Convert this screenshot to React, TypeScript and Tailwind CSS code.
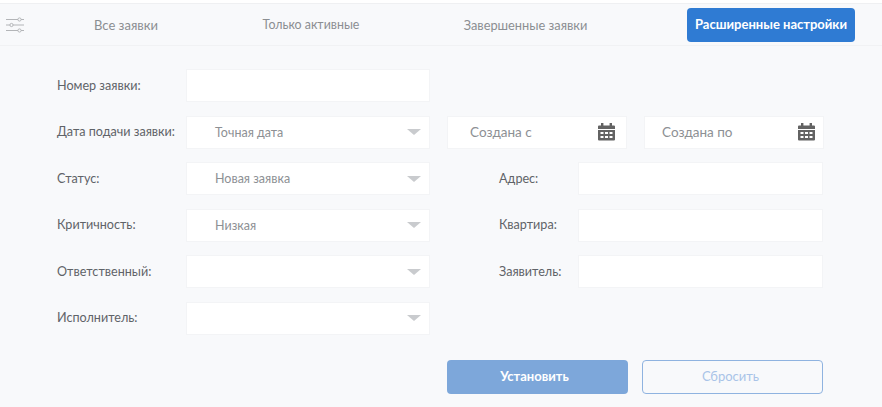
import { ReactNode } from "react";

const font = "font-['Lato','Noto_Sans',sans-serif]";

function FieldLabel(props: { children: ReactNode; className?: string }) {
  return (
    <div className={`text-[12.6px] leading-none pt-[1px] text-[#5f6368] ${props.className ?? ""}`}>
      {props.children}
    </div>
  );
}

function Box(props: { className?: string; children?: ReactNode }) {
  return (
    <div
      className={`h-[33px] flex items-center bg-white border border-[#f3f4f6] text-[12.5px] text-[#8d9094] ${props.className ?? ""}`}
    >
      {props.children}
    </div>
  );
}

function Select(props: { value?: string }) {
  return (
    <Box className="w-[244px] justify-between pl-[28px] pr-[8px]">
      <span className="pt-[2px]">{props.value}</span>
      <svg width="14" height="6" viewBox="0 0 14 6">
        <path d="M0 0H14L7 6Z" fill="#c9cbce" />
      </svg>
    </Box>
  );
}

function CalendarIcon() {
  return (
    <svg width="17" height="18" viewBox="0 0 17 18" fill="#636363">
      <rect x="3" y="0" width="2.4" height="4" />
      <rect x="11.6" y="0" width="2.4" height="4" />
      <path d="M0 3.5a1 1 0 0 1 1-1h15a1 1 0 0 1 1 1V6H0Z" />
      <path
        fillRule="evenodd"
        d="M0 7h17v9.5a1 1 0 0 1-1 1H1a1 1 0 0 1-1-1ZM2.5 9v2h3V9Zm4.5 0v2h3V9Zm4.5 0v2h3V9ZM2.5 13v2h3v-2Zm4.5 0v2h3v-2Zm4.5 0v2h3v-2Z"
      />
    </svg>
  );
}

function DateBox(props: { text: string; className: string }) {
  return (
    <Box className={`w-[180px] justify-between ${props.className}`}>
      <span className="text-[13.5px] pt-[1px]">{props.text}</span>
      <CalendarIcon />
    </Box>
  );
}

function Row(props: { label: string; left: ReactNode; right?: ReactNode }) {
  return (
    <div className="flex items-center h-[33px]">
      <FieldLabel className="w-[129px]">{props.label}</FieldLabel>
      {props.left}
      {props.right && <div className="ml-[17px] flex items-center">{props.right}</div>}
    </div>
  );
}

function Side(props: { label: string }) {
  return (
    <>
      <FieldLabel className="w-[131px] pl-[52px]">{props.label}</FieldLabel>
      <Box className="w-[245px]" />
    </>
  );
}

export default function App() {
  return (
    <div className={`w-[882px] h-[407px] bg-[#f8f9fb] overflow-hidden ${font}`}>
      <div className="h-[4px] bg-white border-b border-[#eff0f2]" />
      <nav className="h-[42px] flex items-center border-b border-[#f1f2f4]">
        <div className="w-[32px] pl-[6px] shrink-0">
          <svg width="18" height="16" viewBox="0 0 18 16" fill="none" stroke="#b3b5b8" strokeWidth="1">
            <path d="M0 2.5H12M15 2.5H18M0 8H4M7 8H18M0 13.5H12M15 13.5H18" />
            <circle cx="13.5" cy="2.5" r="1.6" />
            <circle cx="5.5" cy="8" r="1.6" />
            <circle cx="13.5" cy="13.5" r="1.6" />
          </svg>
        </div>
        <div className="w-[188px] text-center text-[13px] leading-[20px] text-[#8b8e92]">Все заявки</div>
        <div className="w-[182px] text-center text-[12.4px] leading-[20px] pt-[1px] text-[#8b8e92]">Только активные</div>
        <div className="w-[247px] text-center text-[12.8px] leading-[20px] text-[#8b8e92]">Завершенные заявки</div>
        <button className="ml-[38px] w-[168px] h-[34px] rounded-[4px] bg-[#2f7bd3] text-white text-[13px] font-bold">
          Расширенные настройки
        </button>
      </nav>
      <div className="pl-[57px] pt-[23px] flex flex-col gap-[13.5px]">
        <Row label="Номер заявки:" left={<Box className="w-[244px]" />} />
        <Row
          label="Дата подачи заявки:"
          left={<Select value="Точная дата" />}
          right={
            <div className="flex gap-[17px]">
              <DateBox text="Создана с" className="pl-[22px] pr-[11px]" />
              <DateBox text="Создана по" className="pl-[17px] pr-[8px]" />
            </div>
          }
        />
        <Row label="Статус:" left={<Select value="Новая заявка" />} right={<Side label="Адрес:" />} />
        <Row label="Критичность:" left={<Select value="Низкая" />} right={<Side label="Квартира:" />} />
        <Row label="Ответственный:" left={<Select />} right={<Side label="Заявитель:" />} />
        <Row label="Исполнитель:" left={<Select />} />
      </div>
      <div className="pl-[447px] pt-[25px] flex gap-[14px]">
        <button className="w-[181px] h-[34px] pr-[6px] pt-[1px] rounded-[4px] bg-[#7da7da] text-white text-[13px] font-bold">
          Установить
        </button>
        <button className="w-[181px] h-[34px] pr-[4px] pt-[1px] rounded-[4px] border border-[#8fb3e0] text-[#a9c4e8] text-[13px]">
          Сбросить
        </button>
      </div>
    </div>
  );
}
